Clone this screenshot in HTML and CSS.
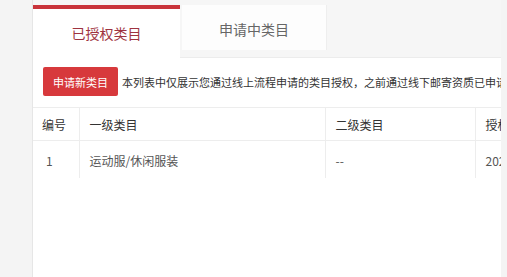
FILE: index.html
```html
<!DOCTYPE html>
<html lang="zh-CN">
<head>
<meta charset="utf-8">
<title>类目授权</title>
<link rel="stylesheet" href="styles.css">
</head>
<body>
<div class="panel">
  <div class="tabbar">
    <div class="tab tab-active">已授权类目</div>
    <div class="tab">申请中类目</div>
  </div>
  <div class="content">
    <div class="toolbar">
      <button class="btn-apply">申请新类目</button>
      <span class="notice">本列表中仅展示您通过线上流程申请的类目授权，之前通过线下邮寄资质已申请的类目授权请联系客服查询</span>
    </div>
    <table class="grid">
      <colgroup>
        <col class="c1"><col class="c2"><col class="c3"><col class="c4">
      </colgroup>
      <thead>
        <tr><th>编号</th><th>一级类目</th><th>二级类目</th><th>授权时间</th></tr>
      </thead>
      <tbody>
        <tr><td>1</td><td>运动服/休闲服装</td><td>--</td><td>2021-03-01</td></tr>
      </tbody>
    </table>
  </div>
</div>
</body>
</html>
```
FILE: styles.css
```css
html, body {
  margin: 0;
  padding: 0;
  height: 100%;
}
body {
  background: #f4f4f4;
  font-family: "Noto Sans CJK SC", "Noto Sans", sans-serif;
  color: #333;
}
.panel {
  margin-left: 32px;
  width: 469px;
  height: 277px;
  border-left: 1px solid #e6e6e6;
  box-sizing: border-box;
  background: #fff;
  display: flex;
  flex-direction: column;
  overflow: hidden;
}
.tabbar {
  display: flex;
  align-items: flex-start;
  padding-top: 5px;
  height: 52px;
  background: #f6f6f6;
  border-bottom: 1px solid #ececec;
  flex: none;
}
.tab {
  width: 145px;
  height: 45px;
  margin-left: 2px;
  background: #fdfdfd;
  color: #666;
  font-size: 14px;
  display: flex;
  align-items: center;
  justify-content: center;
  border-right: 1px solid #eeeeee;
  box-sizing: border-box;
  padding-top: 3px;
}
.tab-active {
  width: 147px;
  margin-left: 0;
  height: 53px;
  border-top: 4px solid #c9343b;
  background: #fff;
  color: #9e3340;
  border-right: none;
  padding-top: 0;
  padding-bottom: 2px;
  box-sizing: border-box;
  position: relative;
  z-index: 1;
}
.content {
  flex: 1;
  background: #fff;
}
.toolbar {
  display: flex;
  align-items: center;
  gap: 4px;
  padding: 9px 0 0 10px;
  white-space: nowrap;
}
.btn-apply {
  flex: none;
  width: 75px;
  height: 29px;
  border: none;
  border-radius: 2px;
  background: #d7393c;
  color: #fff;
  font-family: inherit;
  font-size: 11px;
  padding: 0;
}
.notice {
  font-size: 11px;
  color: #333;
}
.grid {
  margin-top: 11px;
  border-collapse: collapse;
  table-layout: fixed;
  width: 560px;
  font-size: 12px;
}
.c1 { width: 46px; }
.c2 { width: 246px; }
.c3 { width: 150px; }
.c4 { width: 118px; }
.grid th,
.grid td {
  text-align: left;
  font-weight: normal;
  padding: 0 0 0 10px;
  border-right: 1px solid #ededed;
  white-space: nowrap;
  overflow: hidden;
}
.grid th {
  height: 32px;
  border-top: 1px solid #ededed;
  border-bottom: 1px solid #ededed;
  color: #333;
}
.grid th:first-child {
  padding-left: 9px;
}
.grid td {
  height: 37px;
  padding-top: 3px;
  box-sizing: border-box;
  color: #555;
}
.grid td:first-child {
  padding-left: 13px;
}
```
